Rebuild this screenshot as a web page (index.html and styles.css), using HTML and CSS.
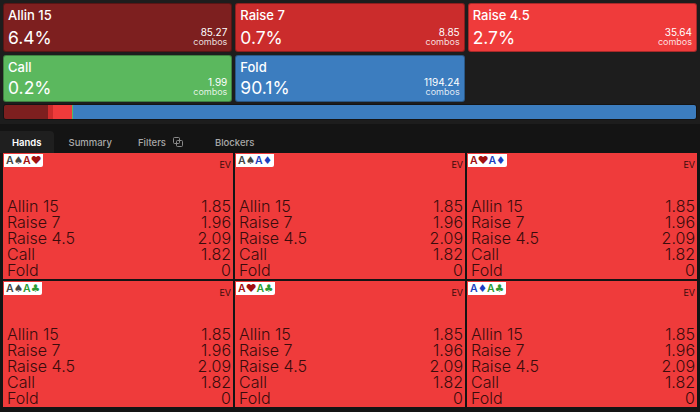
FILE: index.html
```html
<!DOCTYPE html>
<html>
<head>
<meta charset="utf-8">
<link rel="stylesheet" href="styles.css">
</head>
<body>
<div class="top">
  <div class="actions">
    <div class="act allin"><div class="name">Allin 15</div><div class="bot"><span class="pct">6.4%</span><span class="combos"><span class="num">85.27</span><span class="lbl">combos</span></span></div></div>
    <div class="act raise7"><div class="name">Raise 7</div><div class="bot"><span class="pct">0.7%</span><span class="combos"><span class="num">8.85</span><span class="lbl">combos</span></span></div></div>
    <div class="act raise45"><div class="name">Raise 4.5</div><div class="bot"><span class="pct">2.7%</span><span class="combos"><span class="num">35.64</span><span class="lbl">combos</span></span></div></div>
    <div class="act call"><div class="name">Call</div><div class="bot"><span class="pct">0.2%</span><span class="combos"><span class="num">1.99</span><span class="lbl">combos</span></span></div></div>
    <div class="act fold"><div class="name">Fold</div><div class="bot"><span class="pct">90.1%</span><span class="combos"><span class="num">1194.24</span><span class="lbl">combos</span></span></div></div>
  </div>
  <div class="bar">
    <span class="seg allin" style="width:6.4%"></span>
    <span class="seg raise7" style="width:0.7%"></span>
    <span class="seg raise45" style="width:2.7%"></span>
    <span class="seg call" style="width:0.2%"></span>
    <span class="seg fold" style="flex:1"></span>
  </div>
</div>
<div class="tabs">
  <div class="tab active">Hands</div>
  <div class="tab summary">Summary</div>
  <div class="tab filters">Filters <svg class="ficon" width="10" height="10" viewBox="0 0 10 10"><rect x="0.5" y="0.5" width="6" height="6" rx="1" fill="none" stroke="#8a8a8a"/><rect x="3.5" y="3.5" width="6" height="6" rx="1" fill="none" stroke="#8a8a8a"/></svg></div>
  <div class="tab">Blockers</div>
</div>
<div class="grid">
  <div class="cell">
    <div class="head"><span class="hand"><span class="sp">A♠</span><span class="ht">A♥</span></span><span class="ev">EV</span></div>
    <div class="rows"><div class="row"><span>Allin 15</span><span>1.85</span></div><div class="row"><span>Raise 7</span><span>1.96</span></div><div class="row"><span>Raise 4.5</span><span>2.09</span></div><div class="row"><span>Call</span><span>1.82</span></div><div class="row"><span>Fold</span><span>0</span></div></div>
  </div>
  <div class="cell">
    <div class="head"><span class="hand"><span class="sp">A♠</span><span class="di">A♦</span></span><span class="ev">EV</span></div>
    <div class="rows"><div class="row"><span>Allin 15</span><span>1.85</span></div><div class="row"><span>Raise 7</span><span>1.96</span></div><div class="row"><span>Raise 4.5</span><span>2.09</span></div><div class="row"><span>Call</span><span>1.82</span></div><div class="row"><span>Fold</span><span>0</span></div></div>
  </div>
  <div class="cell">
    <div class="head"><span class="hand"><span class="ht">A♥</span><span class="di">A♦</span></span><span class="ev">EV</span></div>
    <div class="rows"><div class="row"><span>Allin 15</span><span>1.85</span></div><div class="row"><span>Raise 7</span><span>1.96</span></div><div class="row"><span>Raise 4.5</span><span>2.09</span></div><div class="row"><span>Call</span><span>1.82</span></div><div class="row"><span>Fold</span><span>0</span></div></div>
  </div>
  <div class="cell">
    <div class="head"><span class="hand"><span class="sp">A♠</span><span class="cl">A♣</span></span><span class="ev">EV</span></div>
    <div class="rows"><div class="row"><span>Allin 15</span><span>1.85</span></div><div class="row"><span>Raise 7</span><span>1.96</span></div><div class="row"><span>Raise 4.5</span><span>2.09</span></div><div class="row"><span>Call</span><span>1.82</span></div><div class="row"><span>Fold</span><span>0</span></div></div>
  </div>
  <div class="cell">
    <div class="head"><span class="hand"><span class="ht">A♥</span><span class="cl">A♣</span></span><span class="ev">EV</span></div>
    <div class="rows"><div class="row"><span>Allin 15</span><span>1.85</span></div><div class="row"><span>Raise 7</span><span>1.96</span></div><div class="row"><span>Raise 4.5</span><span>2.09</span></div><div class="row"><span>Call</span><span>1.82</span></div><div class="row"><span>Fold</span><span>0</span></div></div>
  </div>
  <div class="cell">
    <div class="head"><span class="hand"><span class="di">A♦</span><span class="cl">A♣</span></span><span class="ev">EV</span></div>
    <div class="rows"><div class="row"><span>Allin 15</span><span>1.85</span></div><div class="row"><span>Raise 7</span><span>1.96</span></div><div class="row"><span>Raise 4.5</span><span>2.09</span></div><div class="row"><span>Call</span><span>1.82</span></div><div class="row"><span>Fold</span><span>0</span></div></div>
  </div>
</div>
</body>
</html>
```
FILE: styles.css
```css
* { box-sizing: border-box; }
html, body { margin: 0; padding: 0; }
body {
  width: 700px;
  height: 412px;
  overflow: hidden;
  background: #141414;
  font-family: Inter, "Liberation Sans", sans-serif;
  color: #fff;
}
.top {
  background: #1d1d1d;
  padding: 3px 3px 4px;
}
.actions {
  display: grid;
  grid-template-columns: repeat(3, 1fr);
  grid-template-rows: 49px 47px;
  gap: 3px;
}
.act {
  border: 1px solid rgba(0,0,0,0.3);
  border-radius: 3px;
  padding: 3px 4px 3px 4px;
  display: flex;
  flex-direction: column;
  justify-content: space-between;
}
.allin { background: #7d1f1f; }
.raise7 { background: #cb2c2c; }
.raise45 { background: #ef3b3b; }
.call { background: #5bb85e; }
.fold { background: #3c7dbf; }
.name { font-size: 13px; line-height: 16px; font-weight: 500; }
.bot { display: flex; justify-content: space-between; align-items: flex-end; }
.pct { font-size: 17.5px; line-height: 20px; }
.combos { display: flex; flex-direction: column; align-items: flex-end; margin-bottom: 2px; }
.num { font-size: 10px; line-height: 10px; }
.lbl { font-size: 9px; line-height: 9px; color: rgba(255,255,255,0.85); }
.bar {
  display: flex;
  height: 16px;
  margin-top: 2px;
  border-radius: 3px;
  overflow: hidden;
  border: 1px solid rgba(0,0,0,0.3);
}
.seg { display: block; height: 100%; }
.tabs {
  display: flex;
  align-items: flex-end;
  height: 29px;
  font-size: 9.5px;
  font-weight: 500;
}
.tab {
  height: 22px;
  padding: 0 13px 0 15px;
  color: #a9a9a9;
  display: flex;
  align-items: center;
  gap: 7px;
}
.tab.summary { padding-right: 11px; }
.tab.filters { padding-right: 17px; }
.tab.active {
  background: #1f1f1f;
  color: #fff;
  font-weight: 600;
  border-top-right-radius: 4px;
  padding: 0 12px;
}
.ficon { display: block; }
.grid {
  display: grid;
  grid-template-columns: repeat(3, 1fr);
  grid-template-rows: 126px 126px;
  gap: 2px;
  padding: 0 3px;
}
.cell {
  background: #ef3b3b;
  display: flex;
  flex-direction: column;
  justify-content: space-between;
  color: #3a0c0c;
  padding: 1px 2px 1px 1px;
}
.head { display: flex; justify-content: space-between; align-items: flex-end; }
.hand {
  background: #fff;
  font-size: 10.5px;
  line-height: 13px;
  font-weight: 600;
  padding: 0 2px 0 2px;
  border-radius: 0 0 2px 0;
  font-family: Inter, "DejaVu Sans", sans-serif;
}
.sp { color: #444; }
.ht { color: #a01010; }
.di { color: #1c3fbf; }
.cl { color: #2b9a32; }
.ev { font-size: 9px; line-height: 10px; margin-bottom: -3px; }
.rows { padding-left: 3px; }
.row {
  display: flex;
  justify-content: space-between;
  font-size: 16px;
  font-weight: 300;
  line-height: 16px;
}
```
